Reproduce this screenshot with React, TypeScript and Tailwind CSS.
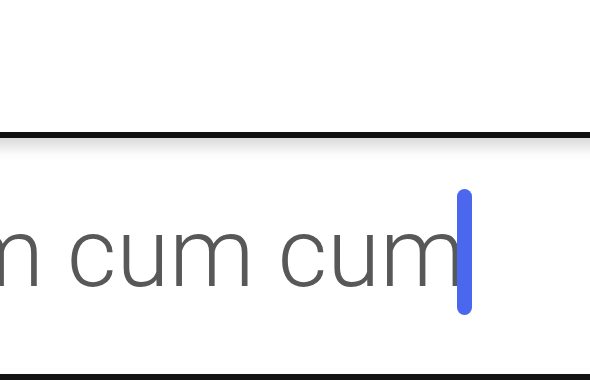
export default function App() {
  return (
    <div className="h-[380px] w-[590px] overflow-hidden bg-white" style={{ fontFamily: 'Roboto, "Liberation Sans", sans-serif' }}>
      <div className="h-[132px]" />
      <div className="-mx-[30px] flex h-[248px] items-center justify-end overflow-hidden border-y-[6px] border-[#111] bg-white pr-[148px] shadow-[inset_0_8px_16px_rgba(0,0,0,0.17)]">
        <span className="whitespace-nowrap pb-[6px] text-[96px] font-light leading-none text-[#585858]">cum cum cum cum</span>
        <span className="-ml-[8px] mb-[8px] h-[126px] w-[15px] shrink-0 rounded-full bg-[#4a67ee]" />
      </div>
    </div>
  );
}
